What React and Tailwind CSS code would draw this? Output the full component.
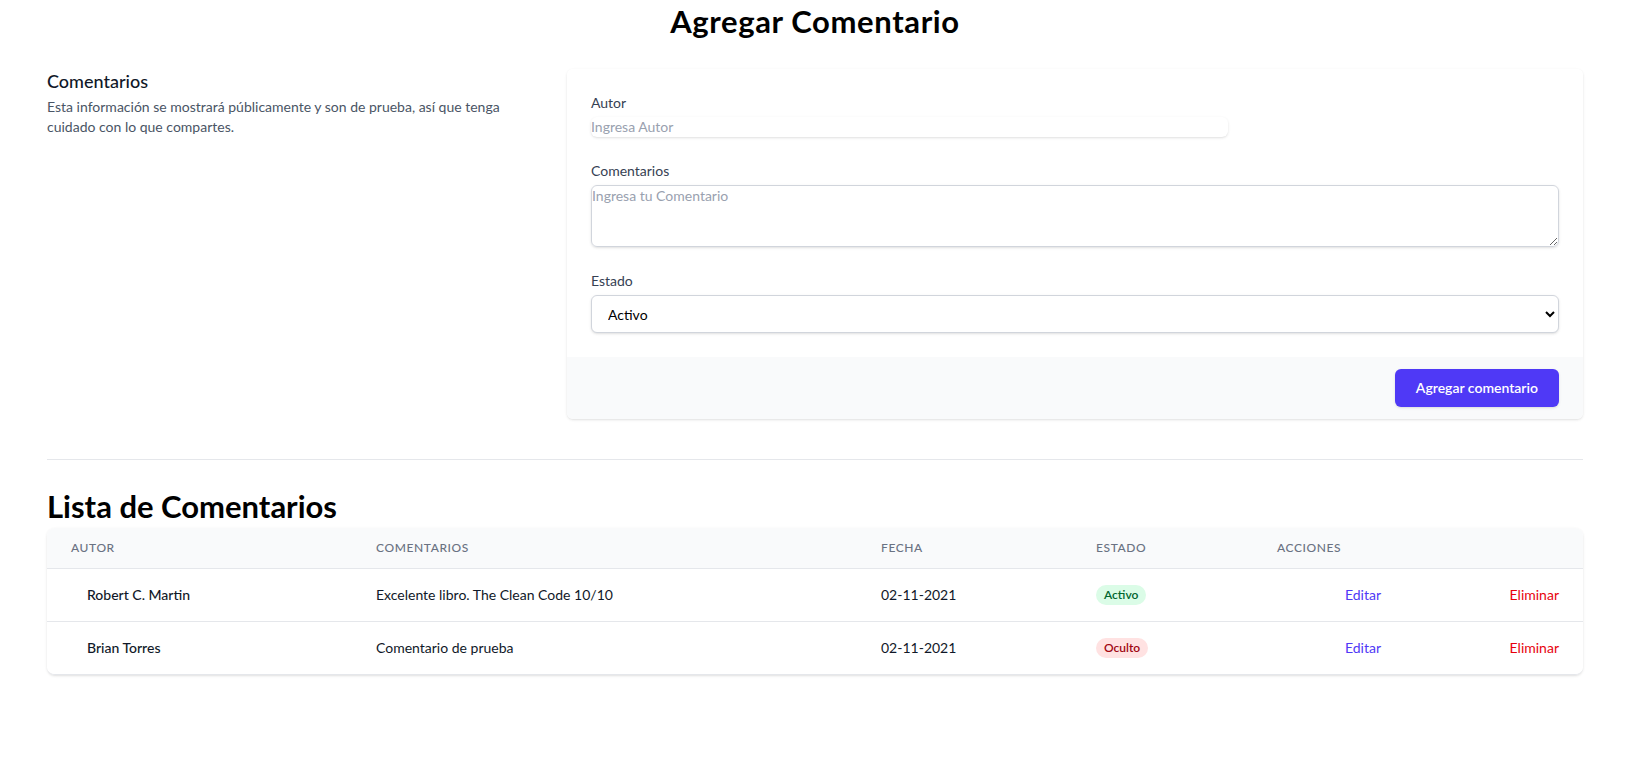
const comentarios = [
  { autor: 'Robert C. Martin', texto: 'Excelente libro. The Clean Code 10/10', fecha: '02-11-2021', activo: true },
  { autor: 'Brian Torres', texto: 'Comentario de prueba', fecha: '02-11-2021', activo: false },
];

function Formulario() {
  return (
    <div className="mt-[30px] grid grid-cols-3 gap-6">
      <div className="col-span-1">
        <h3 className="text-lg leading-6 font-medium text-gray-900">Comentarios</h3>
        <p className="mt-1 text-sm text-gray-600">
          Esta información se mostrará públicamente y son de prueba, así que tenga cuidado con lo que compartes.
        </p>
      </div>
      <div className="col-span-2">
        <form className="shadow rounded-md overflow-hidden">
          <div className="bg-white p-6">
            <div className="grid grid-cols-6 gap-6">
              <div className="col-span-4">
                <label className="block text-sm text-gray-700">Autor</label>
                <input
                  type="text"
                  placeholder="Ingresa Autor"
                  className="mt-1 block w-full h-5 shadow-sm rounded-md text-sm placeholder:text-gray-400 outline-none"
                />
              </div>
              <div className="col-span-6">
                <label className="block text-sm text-gray-700">Comentarios</label>
                <textarea
                  rows={3}
                  placeholder="Ingresa tu Comentario"
                  className="mt-1 block w-full h-[62px] shadow-sm rounded-md border border-gray-300 text-sm placeholder:text-gray-400 outline-none"
                />
              </div>
              <div className="col-span-6">
                <label className="block text-sm text-gray-700">Estado</label>
                <select className="mt-1 block w-full h-[38px] px-3 border border-gray-300 bg-white rounded-md shadow-sm text-sm text-black outline-none">
                  <option>Activo</option>
                  <option>Oculto</option>
                </select>
              </div>
            </div>
          </div>
          <div className="px-6 py-3 bg-gray-50 text-right">
            <button
              type="button"
              className="inline-flex justify-center py-2 px-5 border border-transparent rounded-md shadow-sm text-sm font-semibold text-white bg-indigo-600"
            >
              Agregar comentario
            </button>
          </div>
        </form>
      </div>
    </div>
  );
}

function Tabla() {
  return (
    <div className="mt-1 shadow overflow-hidden border-b border-gray-200 rounded-lg">
      <table className="w-full table-fixed divide-y divide-gray-200">
        <thead className="bg-gray-50">
          <tr>
            <th className="w-[305px] px-6 py-3 text-left text-xs font-medium text-gray-500 uppercase tracking-wider">Autor</th>
            <th className="w-[505px] px-6 py-3 text-left text-xs font-medium text-gray-500 uppercase tracking-wider">Comentarios</th>
            <th className="w-[215px] px-6 py-3 text-left text-xs font-medium text-gray-500 uppercase tracking-wider">Fecha</th>
            <th className="w-[181px] px-6 py-3 text-left text-xs font-medium text-gray-500 uppercase tracking-wider">Estado</th>
            <th className="w-[152px] px-6 py-3 text-left text-xs font-medium text-gray-500 uppercase tracking-wider">Acciones</th>
            <th className="px-6 py-3"></th>
          </tr>
        </thead>
        <tbody className="bg-white divide-y divide-gray-200">
          {comentarios.map((c) => (
            <tr key={c.autor}>
              <td className="px-6 py-4 whitespace-nowrap text-sm">
                <div className="ml-4 font-medium text-gray-900">{c.autor}</div>
              </td>
              <td className="px-6 py-4 whitespace-nowrap text-sm text-gray-900">{c.texto}</td>
              <td className="px-6 py-4 whitespace-nowrap text-sm text-gray-900">{c.fecha}</td>
              <td className="px-6 py-4 whitespace-nowrap text-sm">
                <div className="flex h-5">
                  {c.activo ? (
                    <span className="px-2 text-xs leading-5 font-semibold rounded-full bg-green-100 text-green-800">Activo</span>
                  ) : (
                    <span className="px-2 text-xs leading-5 font-semibold rounded-full bg-red-100 text-red-800">Oculto</span>
                  )}
                </div>
              </td>
              <td className="px-6 py-4 whitespace-nowrap text-right text-sm text-indigo-600">Editar</td>
              <td className="px-6 py-4 whitespace-nowrap text-right text-sm text-red-600">Eliminar</td>
            </tr>
          ))}
        </tbody>
      </table>
    </div>
  );
}

export default function App() {
  return (
    <div className="min-h-screen bg-white pr-[6px] font-[Lato,sans-serif]">
      <div className="max-w-[1536px] mx-auto pt-[3px]">
        <h1 className="text-[31px] leading-9 tracking-[0.02em] font-bold text-black text-center">Agregar Comentario</h1>
        <Formulario />
        <div className="mt-10 border-t border-gray-200" />
        <h2 className="mt-7 text-[31px] leading-9 font-bold text-black">Lista de Comentarios</h2>
        <Tabla />
      </div>
    </div>
  );
}
